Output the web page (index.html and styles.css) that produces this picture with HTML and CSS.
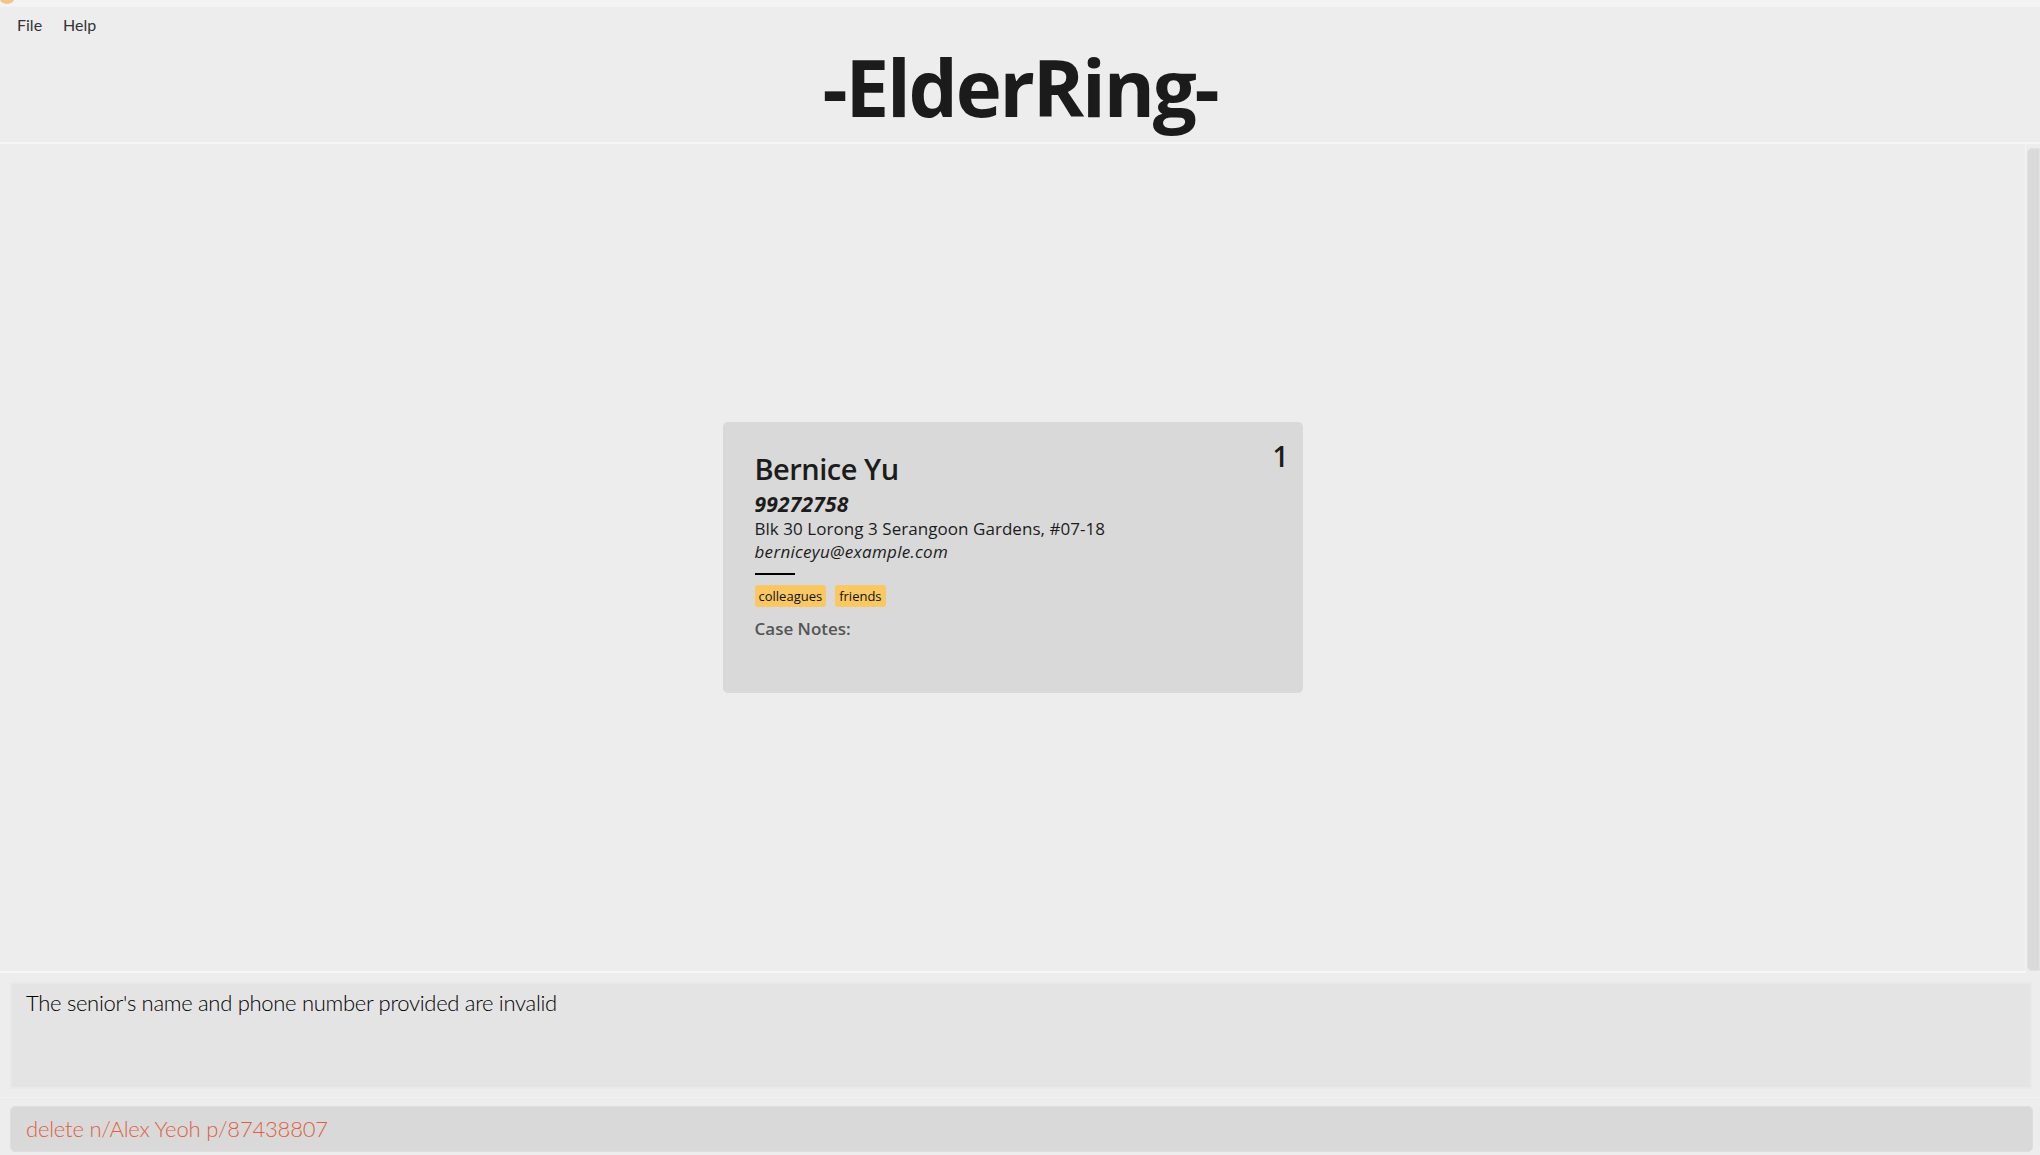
FILE: index.html
```html
<!DOCTYPE html>
<html lang="en">
<head>
<meta charset="utf-8">
<title>ElderRing</title>
<link rel="stylesheet" href="styles.css">
</head>
<body>
<div class="app">
  <div class="titlebar"><span class="app-icon"></span></div>
  <nav class="menubar">
    <span class="menu-item">File</span>
    <span class="menu-item">Help</span>
  </nav>
  <header class="title-wrap">
    <h1 class="title">-ElderRing-</h1>
  </header>
  <section class="list-row">
    <div class="list-panel">
      <article class="card">
        <div class="card-index">1</div>
        <div class="card-name">Bernice Yu</div>
        <div class="card-phone">99272758</div>
        <div class="card-address">Blk 30 Lorong 3 Serangoon Gardens, #07-18</div>
        <div class="card-email">berniceyu@example.com</div>
        <div class="card-rule"></div>
        <div class="tags">
          <span class="tag">colleagues</span>
          <span class="tag">friends</span>
        </div>
        <div class="case-notes">Case Notes:</div>
      </article>
    </div>
    <div class="scroll-track"><div class="scroll-thumb"></div></div>
  </section>
  <section class="result-wrap">
    <div class="result-box">The senior's name and phone number provided are invalid</div>
  </section>
  <section class="command-wrap">
    <div class="command-box">delete n/Alex Yeoh p/87438807</div>
  </section>
</div>
</body>
</html>
```
FILE: styles.css
```css
html, body {
  margin: 0;
  padding: 0;
}
body {
  background: #ededed;
  font-family: "Open Sans", "Noto Sans", sans-serif;
  color: #1c1c1c;
  width: 2040px;
  height: 1155px;
  overflow: hidden;
}
.app {
  display: flex;
  flex-direction: column;
  height: 1155px;
}
.titlebar {
  height: 7px;
  background: #f3f3f3;
  position: relative;
}
.app-icon {
  position: absolute;
  left: 0;
  top: -6px;
  width: 14px;
  height: 10px;
  border-radius: 50%;
  background: #f0b060;
  opacity: 0.7;
}
.menubar {
  height: 34px;
  display: flex;
  align-items: center;
  gap: 21px;
  padding-left: 17px;
  font-family: "Lato", "Open Sans", sans-serif;
  font-size: 16px;
  color: #333;
}
.title-wrap {
  height: 101px;
  display: flex;
  justify-content: center;
  border-bottom: 2px solid #f6f6f6;
}
.title {
  margin: 0;
  margin-top: 1px;
  font-size: 78px;
  line-height: 90px;
  font-weight: 700;
  letter-spacing: -2.2px;
  color: #1b1b1b;
}
.list-row {
  height: 829px;
  display: flex;
}
.list-panel {
  flex: 1;
  display: flex;
  align-items: center;
  justify-content: center;
  border-bottom: 2px solid #f6f6f6;
  border-right: 1px solid #f3f3f3;
}
.scroll-track {
  width: 14px;
  padding-top: 4px;
  padding-left: 1px;
  box-sizing: border-box;
}
.scroll-thumb {
  height: 821px;
  background: #dadada;
  border-radius: 5px 0 0 5px;
  border: 1px solid #e2e2e2;
}
.card {
  position: relative;
  width: 580px;
  height: 271px;
  box-sizing: border-box;
  background: #d9d9d9;
  border-radius: 5px;
  padding: 29px 32px 0 32px;
  display: flex;
  flex-direction: column;
  align-items: flex-start;
}
.card-index {
  position: absolute;
  right: 14px;
  top: 16px;
  font-size: 28px;
  line-height: 36px;
  font-weight: 600;
}
.card-name {
  font-size: 29px;
  line-height: 36px;
  font-weight: 600;
  letter-spacing: -0.5px;
}
.card-phone {
  margin-top: 4px;
  font-size: 21px;
  line-height: 26px;
  font-weight: 700;
  font-style: italic;
  letter-spacing: 0.2px;
}
.card-address {
  font-size: 17px;
  line-height: 23px;
  letter-spacing: 0.05px;
}
.card-email {
  font-size: 17px;
  line-height: 23px;
  font-style: italic;
  letter-spacing: 0.3px;
}
.card-rule {
  margin-top: 10px;
  width: 40px;
  height: 2px;
  background: #000;
}
.tags {
  margin-top: 10px;
  display: flex;
  gap: 9px;
}
.tag {
  background: #f9c862;
  color: #111;
  font-size: 13px;
  line-height: 22px;
  height: 22px;
  padding: 0 4px;
  border-radius: 3px;
}
.case-notes {
  margin-top: 11px;
  font-size: 17px;
  line-height: 22px;
  font-weight: 600;
  color: #555;
}
.result-wrap {
  padding: 9px 8px 0 10px;
}
.result-box {
  height: 107px;
  box-sizing: border-box;
  background: #e4e4e4;
  border: 2px solid #e9e9e9;
  padding: 4px 14px;
  font-family: "Lato", "Open Sans", sans-serif;
  font-weight: 300;
  font-size: 22px;
  line-height: 30px;
  letter-spacing: -0.3px;
  color: #000;
}
.command-wrap {
  margin-top: 8px;
  border-top: 1px solid #f2f2f2;
  padding: 8px 7px 0 10px;
}
.command-box {
  height: 46px;
  box-sizing: border-box;
  background: #d9d9d9;
  border: 1px solid #dedede;
  border-radius: 5px;
  padding: 0 15px;
  font-family: "Lato", "Open Sans", sans-serif;
  font-weight: 300;
  font-size: 22px;
  line-height: 44px;
  letter-spacing: -0.2px;
  color: #dc6143;
}
```
